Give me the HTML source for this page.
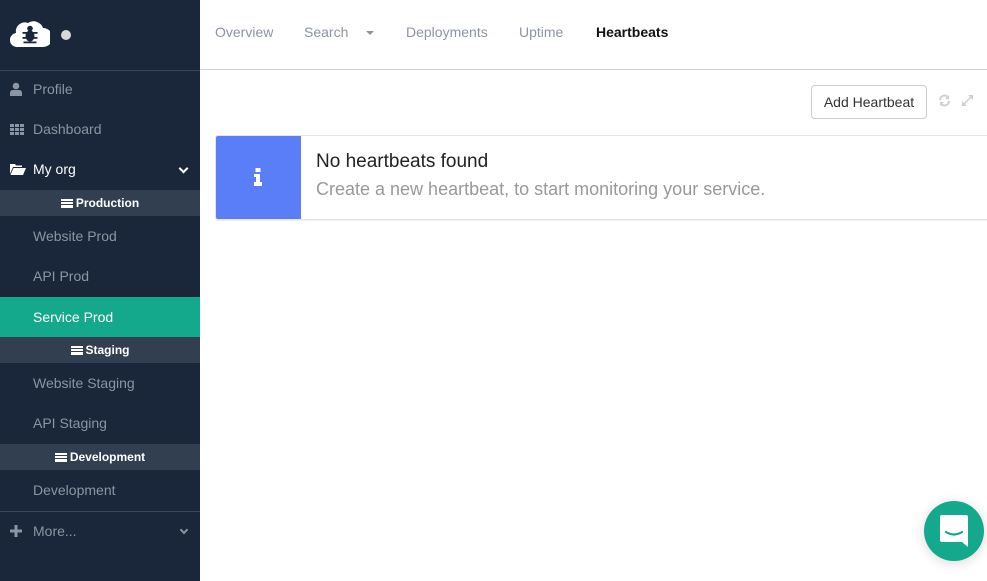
<!DOCTYPE html>
<html><head><meta charset="utf-8"><style>
*{margin:0;padding:0;box-sizing:border-box}
body{width:987px;height:581px;overflow:hidden;background:#fff;font-family:"Liberation Sans",sans-serif;position:relative}
.sb{position:absolute;left:0;top:0;width:200px;height:581px;background:#1a2639}
.it{position:absolute;left:0;width:200px;height:40px;line-height:40px;color:#8b95a3;font-size:14px;padding-left:33px}
.sub{position:absolute;left:0;width:200px;height:26px;line-height:26px;background:#323f51;color:#fff;font-size:12px;text-align:center;font-weight:bold}
.sub i{display:inline-block;width:12px;height:9px;margin-right:3px;vertical-align:-1px;background:linear-gradient(#fff 0 2px,transparent 2px 3px,#fff 3px 5px,transparent 5px 6px,#fff 6px 9px)}
.ic{position:absolute;left:10px}
.chev{position:absolute;right:13px;top:16px;width:7px;height:7px;border-right:2px solid #8b95a3;border-bottom:2px solid #8b95a3;transform:rotate(45deg)}
.nav{position:absolute;top:24px;font-size:14px;color:#8b95a3}
</style></head><body>
<div class="sb">
 <svg style="position:absolute;left:10px;top:18px" width="40" height="30" viewBox="0 0 40 30"><path d="M8 29 A7 7 0 0 1 6 15 A9 9 0 0 1 18 5 A10 10 0 0 1 33 10 A9.5 9.5 0 0 1 33 29 Z" fill="#fff"/><g fill="#1a2639"><ellipse cx="20" cy="18" rx="4.5" ry="5.5"/><circle cx="20" cy="10.5" r="2.8"/><rect x="12.5" y="14" width="15" height="1.8"/><rect x="12.5" y="19" width="15" height="1.8"/><rect x="13.5" y="23.5" width="13" height="1.8"/></g></svg>
 <div style="position:absolute;left:61px;top:30px;width:10px;height:10px;border-radius:50%;background:#d8d8d8"></div>
 <div style="position:absolute;left:0;top:70px;width:200px;height:1px;background:#3a475a"></div>
 <div class="it" style="top:69px"><svg class="ic" style="top:13px" width="12" height="14" viewBox="0 0 12 14"><circle cx="6" cy="4" r="3.3" fill="#8b95a3"/><path d="M0 14 V11 Q0 8 3 8 H9 Q12 8 12 11 V14Z" fill="#8b95a3"/></svg>Profile</div>
 <div class="it" style="top:109px"><svg class="ic" style="top:15px" width="14" height="11" viewBox="0 0 14 11" fill="#8b95a3"><rect x="0" y="0" width="4" height="3"/><rect x="5" y="0" width="4" height="3"/><rect x="10" y="0" width="4" height="3"/><rect x="0" y="4" width="4" height="3"/><rect x="5" y="4" width="4" height="3"/><rect x="10" y="4" width="4" height="3"/><rect x="0" y="8" width="4" height="3"/><rect x="5" y="8" width="4" height="3"/><rect x="10" y="8" width="4" height="3"/></svg>Dashboard</div>
 <div class="it" style="top:149px;color:#fff"><svg class="ic" style="top:15px" width="16" height="11" viewBox="0 0 16 11" fill="#fff"><path d="M0 0 H5 L6 1.5 H12 V3 H3 L0 10Z"/><path d="M3.5 4 H16 L13 11 H0.5Z"/></svg>My org<span class="chev" style="border-color:#fff"></span></div>
 <div class="sub" style="top:190px"><i></i>Production</div>
 <div class="it" style="top:216px">Website Prod</div>
 <div class="it" style="top:256px">API Prod</div>
 <div class="it" style="top:297px;background:#14a88d;color:#fff">Service Prod</div>
 <div class="sub" style="top:337px"><i></i>Staging</div>
 <div class="it" style="top:363px">Website Staging</div>
 <div class="it" style="top:403px">API Staging</div>
 <div class="sub" style="top:444px"><i></i>Development</div>
 <div class="it" style="top:470px">Development</div>
 <div style="position:absolute;left:0;top:511px;width:200px;height:1px;background:#3a475a"></div>
 <div class="it" style="top:511px"><svg class="ic" style="top:14px" width="12" height="12" viewBox="0 0 12 12" fill="#8b95a3"><rect x="4.5" y="0" width="3" height="12"/><rect x="0" y="4.5" width="12" height="3"/></svg>More...<span class="chev" style="width:6px;height:6px"></span></div>
</div>
<div class="nav" style="left:215px">Overview</div>
<div class="nav" style="left:304px">Search</div>
<div style="position:absolute;left:366px;top:31px;border:4px solid transparent;border-top:4px solid #8b95a3;border-bottom:0"></div>
<div class="nav" style="left:406px">Deployments</div>
<div class="nav" style="left:519px">Uptime</div>
<div class="nav" style="left:596px;color:#111;font-weight:bold">Heartbeats</div>
<div style="position:absolute;left:200px;top:69px;width:787px;height:1px;background:#cfd2d6"></div>
<div style="position:absolute;left:811px;top:85px;width:116px;height:34px;border:1px solid #ccc;border-radius:4px;font-size:14px;color:#333;line-height:32px;text-align:center">Add Heartbeat</div>
<svg style="position:absolute;left:938px;top:94px" width="13" height="13" viewBox="0 0 13 13" fill="none" stroke="#d0d0d0" stroke-width="2"><path d="M2 6 A4.5 4.5 0 0 1 10.5 4"/><path d="M11 7 A4.5 4.5 0 0 1 2.5 9"/><path d="M11 1 V5 H7" fill="#d0d0d0" stroke="none"/><path d="M2 12 V8 H6" fill="#d0d0d0" stroke="none"/></svg>
<svg style="position:absolute;left:961px;top:94px" width="13" height="13" viewBox="0 0 13 13" stroke="#d0d0d0" stroke-width="1.5"><path d="M3 10 L10 3"/><path d="M7 1 H12 V6Z M1 7 V12 H6Z" fill="#d0d0d0" stroke="none"/></svg>
<div style="position:absolute;left:215px;top:135px;width:780px;height:85px;border:1px solid #e5e5e5;border-radius:3px;box-shadow:0 1px 1px rgba(0,0,0,.06)"></div>
<div style="position:absolute;left:216px;top:136px;width:85px;height:83px;background:#597ef7;border-radius:2px 0 0 2px"></div>
<svg style="position:absolute;left:253px;top:168px" width="10" height="18" viewBox="0 0 10 18" fill="#fff"><rect x="2.5" y="0" width="5" height="4"/><path d="M1 6 H7 V14 H9 V18 H1 V14 H3 V9 H1Z"/></svg>
<div style="position:absolute;left:316px;top:151px;font-size:19px;color:#222">No heartbeats found</div>
<div style="position:absolute;left:316px;top:179px;font-size:18px;color:#999">Create a new heartbeat, to start monitoring your service.</div>
<div style="position:absolute;left:924px;top:501px;width:60px;height:60px;border-radius:50%;background:#14a88d;box-shadow:0 2px 12px rgba(0,0,0,.15)"></div>
<svg style="position:absolute;left:940px;top:515px" width="28" height="32" viewBox="0 0 28 32"><path d="M2 0 H26 Q28 0 28 2 V32 L22 27 H2 Q0 27 0 25 V2 Q0 0 2 0Z" fill="#fff"/><path d="M6 17 Q14 22 22 17" stroke="#14a88d" stroke-width="2.2" fill="none" stroke-linecap="round"/></svg>
</body></html>
